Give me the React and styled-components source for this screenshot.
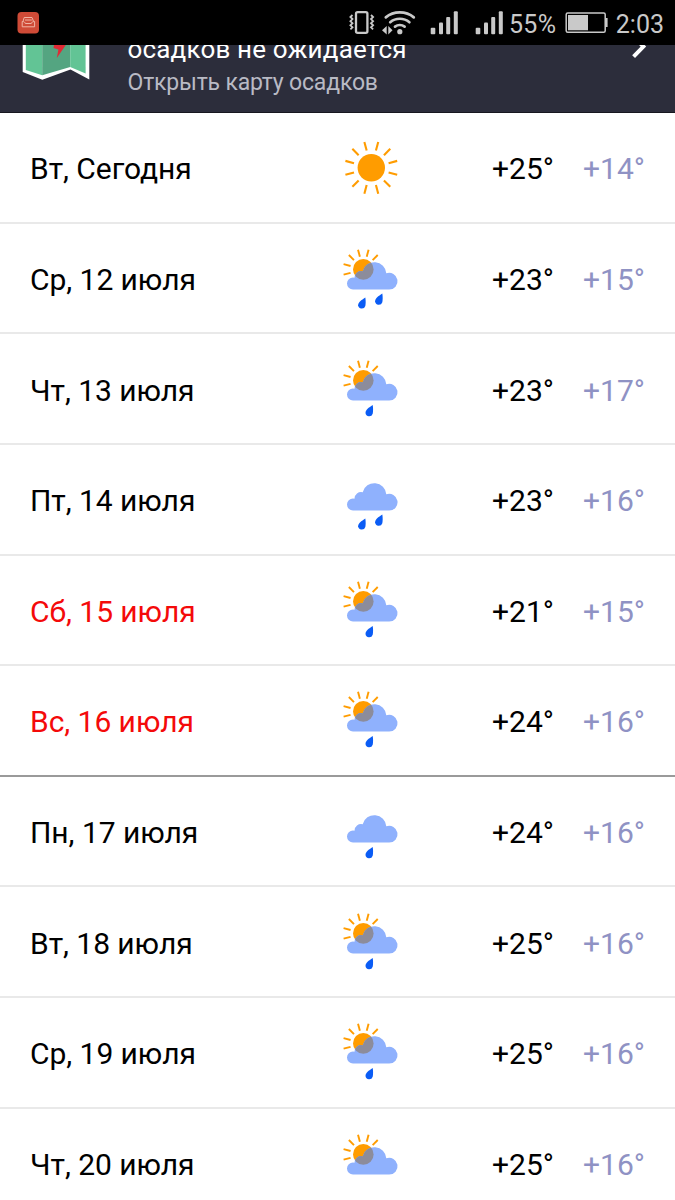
import React from "react"
import styled, { createGlobalStyle } from "styled-components"

const GlobalStyle = createGlobalStyle`
  body {
    margin: 0;
    background-color: #fff;
    font-family: Roboto, "Noto Sans", sans-serif;
    overflow: hidden;
  }
`

const Screen = styled.div`
  width: 675px;
  height: 1200px;
  overflow: hidden;
  background-color: #fff;
`

const StatusBar = styled.div`
  box-sizing: border-box;
  height: 45px;
  padding: 0 11px 0 17px;
  display: flex;
  align-items: center;
  justify-content: space-between;
  background-color: #000;
  color: #c9c9c9;
  font-size: 25px;
  line-height: 45px;
`

const StatusGroup = styled.div`
  display: flex;
  align-items: center;
`

const SignalGroup = styled(StatusGroup)`
  gap: 15px;
  margin: 0 4px 0 13px;
`

const StatusText = styled.span`
  width: ${props => props.$width}px;
  height: 45px;
  padding-top: 2px;
  box-sizing: border-box;
  white-space: nowrap;
  text-align: ${props => props.$align || "left"};
  letter-spacing: ${props => props.$spacing || 0}px;
`

const Banner = styled.div`
  box-sizing: border-box;
  height: 68px;
  padding: 0 27px 0 22px;
  display: flex;
  align-items: flex-start;
  overflow: hidden;
  background-color: #2c2d3b;
  border-bottom: 1px solid #17171f;
`

const BannerText = styled.div`
  flex: 1;
  margin: -13px 0 0 37.5px;
`

const BannerTitle = styled.div`
  color: #fff;
  font-size: 26px;
  line-height: 34px;
  white-space: nowrap;
  letter-spacing: 0.17px;
`

const BannerLink = styled.div`
  color: #b9bac4;
  font-size: 23px;
  line-height: 33px;
  white-space: nowrap;
  letter-spacing: -0.18px;
`

const Row = styled.div`
  box-sizing: border-box;
  height: 110.63px;
  padding: 0 30px;
  display: grid;
  grid-template-columns: 300px 80px 1fr 91px;
  align-items: center;
  border-bottom: 2px solid ${props => (props.$weekEnd ? "#9a9a9a" : "#e9e9e9")};
  font-size: 30px;
  line-height: 36px;
`

const Day = styled.div`
  padding-top: 4px;
  color: ${props => (props.$holiday ? "#f40a0a" : "#000")};
  white-space: nowrap;
  letter-spacing: -0.04px;
`

const High = styled.div`
  padding-top: 4px;
  color: #000;
  text-align: right;
`

const Low = styled.div`
  padding-top: 4px;
  color: #8f92c4;
  text-align: right;
`

const Icon = styled.svg`
  display: block;
  flex: none;
`

const MailIcon = () => (
  <Icon width="22" height="45" viewBox="0 0 22 45">
    <rect x="0.5" y="12" width="21.5" height="21.5" rx="4" fill="#cf4b37" />
    <g fill="none" stroke="#f0b5a5" strokeWidth="1" strokeLinejoin="round">
      <path d="M6 21.5 7.2 17.5H15l1.6 4" />
      <path d="M5.2 21.5v5.3h12.4v-5.3" />
      <path d="M5.2 21.5c2 0 2.7.7 3.1 2h6c.4-1.3 1.2-2 3.3-2" />
      <path d="M8 20h6.8" />
    </g>
  </Icon>
)

const VibrateIcon = () => (
  <Icon width="32" height="45" viewBox="0 0 32 45" fill="none" stroke="#c9c9c9">
    <rect x="7" y="12.2" width="11.4" height="20.6" rx="1.6" strokeWidth="2.3" />
    <path d="M3.5 15 1.4 17l2.1 2-2.1 2.2 2.1 2-2.1 2.1 2.1 2-2.1 2" strokeWidth="1.8" />
    <path d="M22 15l2.1 2-2.1 2 2.1 2.2-2.1 2 2.1 2.1-2.1 2 2.1 2" strokeWidth="1.8" />
  </Icon>
)

const WifiIcon = () => (
  <Icon width="36" height="45" viewBox="0 0 36 45">
    <g fill="none" stroke="#c9c9c9" strokeWidth="2.7" strokeLinecap="round">
      <path d="M4.8 17.4c7.8-6.6 20.2-6.6 28 0" />
      <path d="M9.2 22.2c5.5-4.6 13.7-4.6 19.2 0" />
      <path d="M14 26.6c2.8-2.1 6.8-2.1 9.6 0" />
    </g>
    <circle cx="18.8" cy="31.7" r="2.6" fill="#c9c9c9" />
    <path d="M5.7 26v8.4L1 30.2zM7.3 26v8.4l4.2-4.2z" fill="#c9c9c9" />
  </Icon>
)

const SignalIcon = () => (
  <Icon width="30" height="45" viewBox="0 0 30 45" fill="#c9c9c9">
    <rect x="0.7" y="27.7" width="4.6" height="6.6" rx="1" />
    <rect x="9" y="22.6" width="4" height="11.7" rx="1" />
    <rect x="16.2" y="17" width="4" height="17.3" rx="1" />
    <rect x="23.8" y="11.2" width="4" height="23.1" rx="1" />
  </Icon>
)

const BatteryIcon = () => (
  <Icon width="43" height="45" viewBox="0 0 43 45">
    <rect x="1.2" y="12.9" width="39" height="19.4" rx="1.5" fill="none" stroke="#c9c9c9" strokeWidth="1.5" />
    <rect x="3" y="15" width="20" height="15.3" fill="#c9c9c9" />
    <path d="M40 18h2.6v9H40z" fill="#c9c9c9" />
  </Icon>
)

const MapIcon = () => (
  <Icon width="68" height="36" viewBox="0 0 68 36">
    <path d="M.7 0H67.3V34.6L48.5 24.5 20.3 34.8.7 27z" fill="#fff" />
    <path d="M3.8 0h16.4v30.3L3.8 25z" fill="#62c495" />
    <path d="M20.2 0h28v22L20.2 30.3z" fill="#54a581" />
    <path d="M48.2 0h15.4v28.6L48.2 22z" fill="#62c495" />
    <path d="M32 0H43.8L34.8 13l1.6-8.4L31.5 3z" fill="#e02a35" />
  </Icon>
)

const ChevronIcon = () => (
  <Icon width="16" height="15" viewBox="0 0 16 15">
    <path d="M0.6 -9.6 11.4 1.6 1.6 11.6" fill="none" stroke="#fff" strokeWidth="4" />
  </Icon>
)

const cloudPath =
  "M23 51.2A6 6 0 0 1 23 39.2Q23.9 39.2 24.5 39.3A6.6 6.6 0 0 1 32.7 32.8A12 12 0 0 1 56.3 34.9A8.4 8.4 0 1 1 59.1 51.2Z"

const drops = {
  0: [],
  1: [[42.7, 55.7]],
  2: [[35.3, 59], [52.3, 55.2]],
}

const SunIcon = () => (
  <Icon width="80" height="80" viewBox="0 0 80 80">
    <circle cx="41.3" cy="40.8" r="13.7" fill="#ff9c00" />
    {[...Array(12)].map((_, i) => (
      <path
        key={i}
        d="M41.3 14v8.9"
        stroke="#ff9c00"
        strokeWidth="2.1"
        transform={`rotate(${15 + i * 30} 41.3 40.8)`}
      />
    ))}
  </Icon>
)

const CloudIcon = ({ sun, rain, id }) => (
  <Icon width="80" height="80" viewBox="0 -0.4 80 80">
    {sun && (
      <>
        <circle cx="33.3" cy="31" r="10.3" fill="#ff9c00" />
        {[-105, -75, -45, -15, 15, 45].map(angle => (
          <path
            key={angle}
            d="M33.3 10.6v7.2"
            stroke="#ff9c00"
            strokeWidth="1.9"
            transform={`rotate(${angle} 33.3 31)`}
          />
        ))}
      </>
    )}
    <path d={cloudPath} fill="#8fb1fd" />
    {sun && (
      <>
        <clipPath id={id}>
          <path d={cloudPath} />
        </clipPath>
        <circle cx="33.3" cy="31" r="10.3" fill="#8c8c9b" clipPath={`url(#${id})`} />
      </>
    )}
    {drops[rain].map(([x, y]) => (
      <path
        key={x}
        d="M0 0C-4 2.6-7.2 4.8-7.2 7.9A3.7 3.7 0 0 0 0 8.6C.5 6.5.5 3 0 0Z"
        fill="#0a5cf5"
        transform={`translate(${x} ${y})`}
      />
    ))}
  </Icon>
)

const days = [
  { name: "Вт, Сегодня", high: "+25°", low: "+14°", clear: true },
  { name: "Ср, 12 июля", high: "+23°", low: "+15°", sun: true, rain: 2 },
  { name: "Чт, 13 июля", high: "+23°", low: "+17°", sun: true, rain: 1 },
  { name: "Пт, 14 июля", high: "+23°", low: "+16°", rain: 2 },
  { name: "Сб, 15 июля", high: "+21°", low: "+15°", sun: true, rain: 1, holiday: true },
  { name: "Вс, 16 июля", high: "+24°", low: "+16°", sun: true, rain: 1, holiday: true, weekEnd: true },
  { name: "Пн, 17 июля", high: "+24°", low: "+16°", rain: 1 },
  { name: "Вт, 18 июля", high: "+25°", low: "+16°", sun: true, rain: 1 },
  { name: "Ср, 19 июля", high: "+25°", low: "+16°", sun: true, rain: 1 },
  { name: "Чт, 20 июля", high: "+25°", low: "+16°", sun: true, rain: 0 },
]

const App = () => {

  return (
  <>
    <GlobalStyle />
    <Screen>
      <StatusBar>
        <MailIcon />
        <StatusGroup>
          <VibrateIcon />
          <WifiIcon />
          <SignalGroup>
            <SignalIcon />
            <SignalIcon />
          </SignalGroup>
          <StatusText $width={56} $spacing={0.3}>55%</StatusText>
          <BatteryIcon />
          <StatusText $width={56} $align="right">2:03</StatusText>
        </StatusGroup>
      </StatusBar>

      <Banner>
        <MapIcon />
        <BannerText>
          <BannerTitle>осадков не ожидается</BannerTitle>
          <BannerLink>Открыть карту осадков</BannerLink>
        </BannerText>
        <ChevronIcon />
      </Banner>

      {days.map((day, i) => (
        <Row key={day.name} $weekEnd={day.weekEnd}>
          <Day $holiday={day.holiday}>{day.name}</Day>
          {day.clear ? <SunIcon /> : <CloudIcon id={`cloud-${i}`} sun={day.sun} rain={day.rain} />}
          <High>{day.high}</High>
          <Low>{day.low}</Low>
        </Row>
      ))}
    </Screen>
  </>
  )
}

export default App
